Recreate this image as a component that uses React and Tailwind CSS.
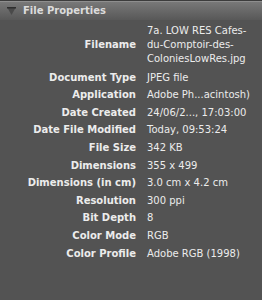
import React from 'react';

const rows = [
    ['Document Type', 'JPEG file'],
    ['Application', 'Adobe Ph...acintosh)'],
    ['Date Created', '24/06/2..., 17:03:00'],
    ['Date File Modified', 'Today, 09:53:24'],
    ['File Size', '342 KB'],
    ['Dimensions', '355 x 499'],
    ['Dimensions (in cm)', '3.0 cm x 4.2 cm'],
    ['Resolution', '300 ppi'],
    ['Bit Depth', '8'],
    ['Color Mode', 'RGB'],
    ['Color Profile', 'Adobe RGB (1998)'],
];

const App = () => {
    return (
        <div className="w-[262px] h-[300px] bg-[#535353] overflow-hidden" style={{ fontFamily: '"DejaVu Sans", sans-serif' }}>
            {/* panel header */}
            <div className="h-[20px] border-t border-[#3c3c3c] bg-gradient-to-b from-[#7a7a7a] to-[#585858] shadow-[inset_0_1px_0_#8e8e8e] flex items-center pl-[7px] gap-[7px]">
                <svg width="9" height="8" viewBox="0 0 9 8">
                    <polygon points="0,0 9,0 4.5,8" fill="#4a4a4a" />
                    <rect x="0" y="0" width="9" height="1.5" fill="#2e2e2e" />
                </svg>
                <span className="text-[10px] font-bold text-[#dcdcdc] leading-none">File Properties</span>
            </div>

            <div className="grid grid-cols-[136px_1fr] gap-x-[11px] gap-y-[3.6px] pt-[4px] text-[10px] leading-[14px] text-[#ececec]">
                <div className="text-right font-bold self-center pb-[1px]">Filename</div>
                <div className="pb-[1px]">
                    7a. LOW RES Cafes-<br />
                    du-Comptoir-des-<br />
                    ColoniesLowRes.jpg
                </div>
                {rows.map(([label, value]) => (
                    <React.Fragment key={label}>
                        <div className="text-right font-bold whitespace-nowrap">{label}</div>
                        <div className="whitespace-nowrap">{value}</div>
                    </React.Fragment>
                ))}
            </div>
        </div>
    );
};

export default App;
